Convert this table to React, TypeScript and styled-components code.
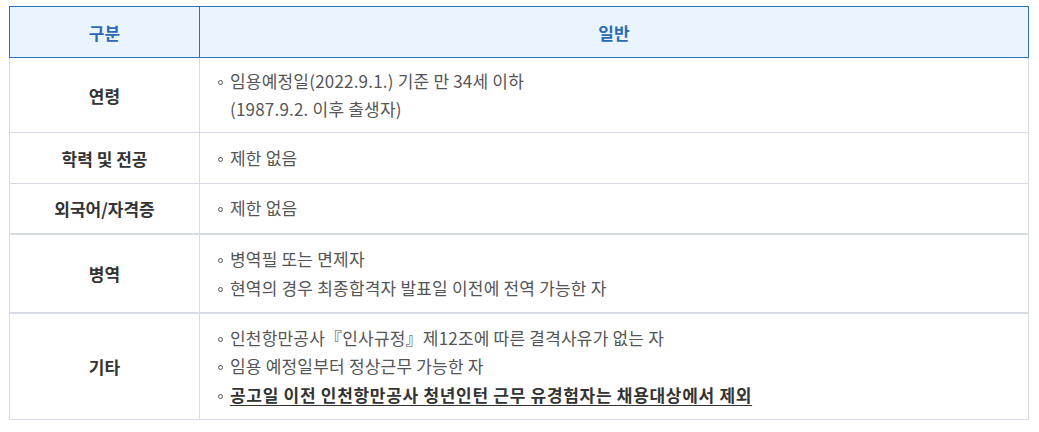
import React from "react";
import styled, { createGlobalStyle } from "styled-components";

const Global = createGlobalStyle`
  html, body { margin: 0; padding: 0; background: #ffffff; }
  body { font-family: "Noto Sans CJK KR", "Noto Sans", sans-serif; }
`;

const Wrapper = styled.div`
  padding: 6px 0 0 9px;
  width: 1020px;
`;

const HeaderRow = styled.div`
  display: grid;
  grid-template-columns: 190px 1fr;
  height: 52px;
  box-sizing: border-box;
  border: 1px solid #2a72c0;
  background: #eaf4fe;
`;

const HeadCell = styled.div<{ $divider?: boolean }>`
  display: flex;
  align-items: center;
  justify-content: center;
  font-size: 17px;
  font-weight: 700;
  color: #2a6ab5;
  border-right: ${(p) => (p.$divider ? "1px solid #2a72c0" : "none")};
`;

const Row = styled.div<{ $h: number; $thick?: boolean }>`
  display: grid;
  grid-template-columns: 190px 1fr;
  height: ${(p) => p.$h}px;
  box-sizing: border-box;
  border-left: 1px solid #d7dbe5;
  border-right: 1px solid #d7dbe5;
  border-bottom: ${(p) => (p.$thick ? 2 : 1)}px solid #d7dbe5;
`;

const Label = styled.div`
  display: flex;
  align-items: center;
  justify-content: center;
  font-size: 17px;
  font-weight: 700;
  color: #333333;
  border-right: 1px solid #d7dbe5;
`;

const Content = styled.ul`
  margin: 0;
  padding: 0 0 0 16px;
  list-style: none;
  display: flex;
  flex-direction: column;
  justify-content: center;
`;

const Item = styled.li<{ $strong?: boolean }>`
  position: relative;
  padding-left: 14px;
  font-size: 17px;
  line-height: 28.5px;
  color: ${(p) => (p.$strong ? "#333333" : "#555555")};
  font-weight: ${(p) => (p.$strong ? 700 : 400)};
  letter-spacing: ${(p) => (p.$strong ? "0.7px" : "0.2px")};
  white-space: nowrap;
  &::before {
    content: "";
    position: absolute;
    left: 2px;
    top: 13px;
    width: 3px;
    height: 3px;
    border: 1px solid #555555;
    border-radius: 50%;
  }
`;

const Underlined = styled.span`
  text-decoration: underline;
  text-decoration-thickness: 1px;
  text-underline-offset: 3px;
`;

const rows: { label: string; h: number; thick?: boolean; items: React.ReactNode[] }[] = [
  {
    label: "연령",
    h: 75,
    items: [
      <>
        임용예정일(2022.9.1.) 기준 만 34세 이하
        <br />
        (1987.9.2. 이후 출생자)
      </>,
    ],
  },
  { label: "학력 및 전공", h: 51, items: ["제한 없음"] },
  { label: "외국어/자격증", h: 51, thick: true, items: ["제한 없음"] },
  {
    label: "병역",
    h: 79,
    thick: true,
    items: ["병역필 또는 면제자", "현역의 경우 최종합격자 발표일 이전에 전역 가능한 자"],
  },
];

export default function App() {
  return (
    <Wrapper>
      <Global />
      <HeaderRow>
        <HeadCell $divider>구분</HeadCell>
        <HeadCell>일반</HeadCell>
      </HeaderRow>
      {rows.map((r) => (
        <Row key={r.label} $h={r.h} $thick={r.thick}>
          <Label>{r.label}</Label>
          <Content>
            {r.items.map((it, i) => (
              <Item key={i}>{it}</Item>
            ))}
          </Content>
        </Row>
      ))}
      <Row $h={106}>
        <Label>기타</Label>
        <Content>
          <Item>인천항만공사『인사규정』제12조에 따른 결격사유가 없는 자</Item>
          <Item>임용 예정일부터 정상근무 가능한 자</Item>
          <Item $strong>
            <Underlined>공고일 이전 인천항만공사 청년인턴 근무 유경험자는 채용대상에서 제외</Underlined>
          </Item>
        </Content>
      </Row>
    </Wrapper>
  );
}
